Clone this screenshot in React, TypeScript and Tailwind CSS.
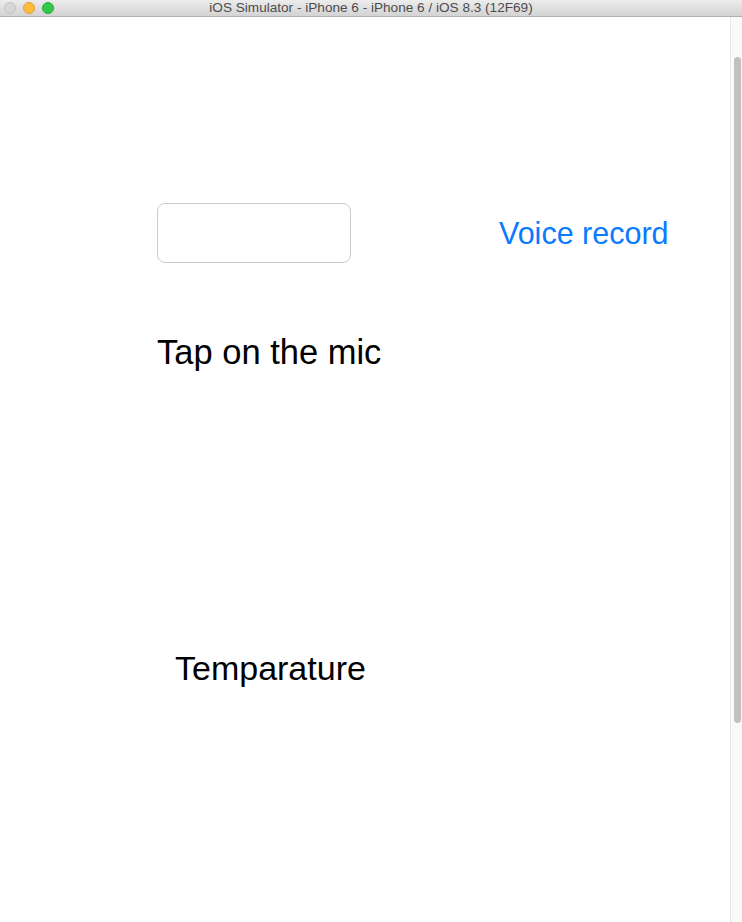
import React from 'react';

export default function App() {
  return (
    <div className="w-[742px] h-[922px] bg-white flex flex-col overflow-hidden font-['Liberation_Sans',Arial,sans-serif]">
      {/* Window title bar */}
      <div className="h-[17px] shrink-0 flex items-center relative bg-gradient-to-b from-[#ececec] to-[#d3d3d3] border-b border-[#b1b1b1]">
        <div className="flex items-center gap-[7px] pl-[4px]">
          <span className="w-[12px] h-[12px] rounded-full bg-[#d6d6d6] border border-[#c4c4c4]" />
          <span className="w-[12px] h-[12px] rounded-full bg-[#fdbc40] border border-[#e0a030]" />
          <span className="w-[12px] h-[12px] rounded-full bg-[#34c84a] border border-[#26a93a]" />
        </div>
        <div className="absolute inset-0 flex items-center justify-center text-[13.6px] text-[#4d4d4d]">
          iOS Simulator - iPhone 6 - iPhone 6 / iOS 8.3 (12F69)
        </div>
      </div>

      <div className="flex-1 flex">
        {/* Screen content */}
        <div className="flex-1 flex flex-col pl-[157px] pt-[186px]">
          <div className="flex items-center">
            <div className="w-[194px] h-[60px] rounded-[8px] border border-[#cccccc] bg-white" />
            <button className="ml-[148px] text-[30.5px] leading-none text-[#0a7aff]">Voice record</button>
          </div>
          <div className="mt-[72px] text-[34.5px] leading-none text-black">Tap on the mic</div>
          <div className="mt-[281px] ml-[18px] text-[34px] leading-none text-black">Temparature</div>
        </div>

        {/* Scrollbar */}
        <div className="w-[12px] shrink-0 bg-[#fafafa] border-l border-[#e6e6e6] flex justify-center pt-[40px]">
          <div className="w-[7px] h-[666px] rounded-full bg-[#c1c1c1] ml-[2px]" />
        </div>
      </div>
    </div>
  );
}
